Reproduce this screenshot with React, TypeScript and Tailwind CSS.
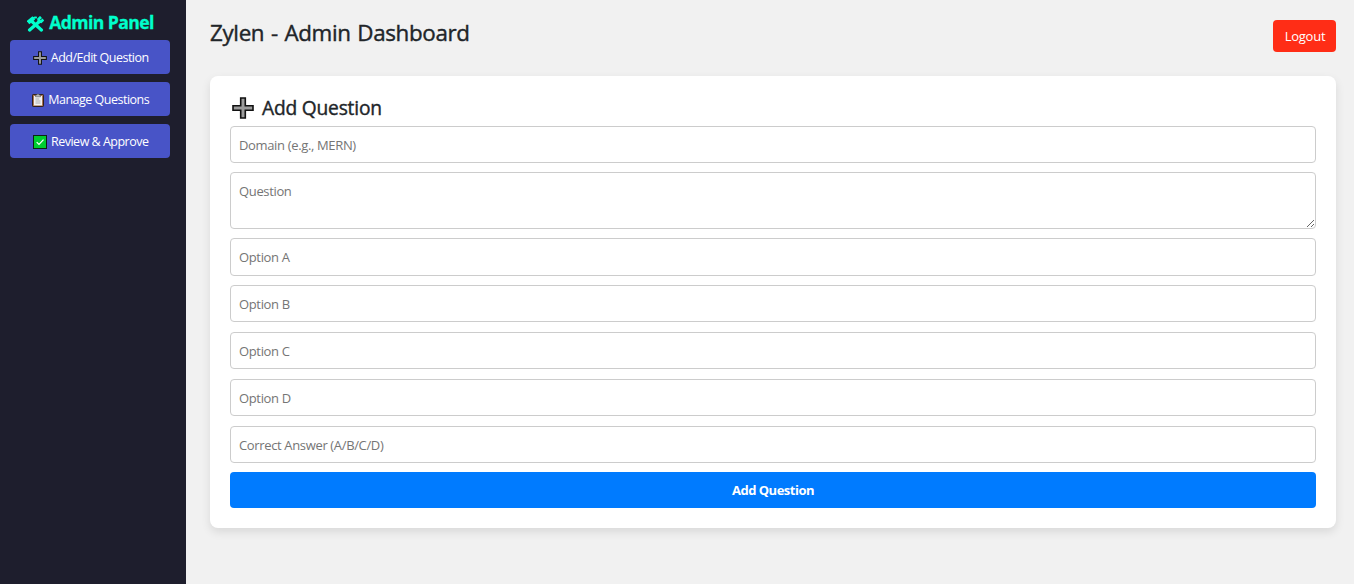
import type { ReactNode } from "react";

function PlusIcon({ className }: { className: string }) {
  return (
    <svg className={className} viewBox="0 0 22 22">
      <path d="M8.7 1h4.6v7.7H21v4.6h-7.7V21H8.7v-7.7H1V8.7h7.7z" fill="#9b9b9b" stroke="#111" strokeWidth="1.6" />
    </svg>
  );
}

function ToolsIcon() {
  return (
    <svg className="mt-0.5 h-4 w-[17px] shrink-0" viewBox="0 0 17 16" fill="none" stroke="#00ffcc">
      <path d="M5.2 5.8 14.4 14" strokeWidth="3.3" strokeLinecap="round" />
      <path d="M1 6.6 6.8 1.8" strokeWidth="4.2" />
      <path d="M6 2.2c1.2-.8 2.4-.9 3.9-.5" strokeWidth="1.8" />
      <path d="M2.6 14 12.4 5.4" strokeWidth="3.3" strokeLinecap="round" />
      <path d="M14 .9 11.6 3.3l.4 2 2 .4 2.4-2.2" strokeWidth="2.8" />
    </svg>
  );
}

function ClipboardIcon() {
  return (
    <svg className="h-[14px] w-3 shrink-0" viewBox="0 0 12 14">
      <rect x=".5" y="1.5" width="11" height="12" rx="0.7" fill="#a87552" stroke="#30201c" />
      <path d="M2 3h8v9.4H2z" fill="#f3f3f3" />
      <path d="M3.5 3.8V2h1.3c.1-1.4 2.3-1.4 2.4 0h1.3v1.8z" fill="#b8b8b8" stroke="#555" strokeWidth=".6" />
      <path d="M3.5 6h3.8M3.5 8h5M3.5 10h5" stroke="#a5a5a5" strokeWidth=".9" />
    </svg>
  );
}

function CheckIcon() {
  return (
    <svg className="h-[14px] w-[14px] shrink-0" viewBox="0 0 14 14">
      <rect x=".5" y=".5" width="13" height="13" fill="#00cc30" stroke="#0b2413" />
      <path d="m3.7 7.2 2.3 2.3 4.5-4.8" fill="none" stroke="#fff" strokeWidth="1.2" />
    </svg>
  );
}

function NavButton({ icon, children }: { icon: ReactNode; children: ReactNode }) {
  return (
    <button className="flex h-[34px] w-full items-center justify-center gap-1 rounded bg-[#4854c7] pt-0.5 pl-[1.5px] text-[12.5px] tracking-[-0.5px] text-white">
      {icon}
      <span>{children}</span>
    </button>
  );
}

const field =
  "block w-full rounded border border-[#ccc] bg-white px-2 text-[13px] tracking-[-0.35px] text-[#212529] outline-none placeholder:text-[#757575]";

export default function App() {
  return (
    <div className="flex h-[584px] w-full overflow-hidden bg-[#f1f1f1] font-['Segoe_UI','Open_Sans',sans-serif] text-[#212529]">
      <aside className="w-[186px] shrink-0 bg-[#1e1e2d] pt-2.5 pr-4 pl-2.5">
        <h2 className="mb-1.5 flex h-6 items-center justify-center gap-[5px] pt-px pl-px text-[17.6px] font-bold text-[#00ffcc]">
          <ToolsIcon />
          <span className="tracking-[-0.6px] [-webkit-text-stroke:0.3px]">Admin Panel</span>
        </h2>
        <nav className="flex flex-col gap-2">
          <NavButton icon={<PlusIcon className="h-[14px] w-[14px] shrink-0" />}>Add/Edit Question</NavButton>
          <NavButton icon={<ClipboardIcon />}>Manage Questions</NavButton>
          <NavButton icon={<CheckIcon />}>Review &amp; Approve</NavButton>
        </nav>
      </aside>

      <main className="flex-1 pt-5 pr-[18px] pl-6">
        <header className="mb-6 flex items-start justify-between">
          <h1 className="text-[22.4px] leading-[26px] font-medium tracking-[-0.35px] [word-spacing:1.2px] [-webkit-text-stroke:0.4px]">
            Zylen - Admin Dashboard
          </h1>
          <button className="h-8 w-[63px] rounded bg-[#ff2d16] pt-px pl-px text-[13px] tracking-[-0.25px] text-white">Logout</button>
        </header>

        <section className="h-[452px] rounded-lg bg-white p-5 shadow-[0_4px_10px_rgba(0,0,0,0.1)]">
          <h2 className="mb-1.5 flex h-6 items-center gap-2 pl-0.5 text-[19.2px] font-medium tracking-[-0.2px]">
            <PlusIcon className="h-[22px] w-[22px] shrink-0" />
            <span className="pt-px [-webkit-text-stroke:0.4px]">Add Question</span>
          </h2>
          <form className="flex flex-col">
            <input className={`${field} mb-[9px] h-[37px]`} placeholder="Domain (e.g., MERN)" />
            <textarea className={`${field} mb-[9px] h-[57px] pt-[9px] pb-2`} placeholder="Question" />
            <input className={`${field} mb-[9px] h-[38px]`} placeholder="Option A" />
            <input className={`${field} mb-2.5 h-[37px]`} placeholder="Option B" />
            <input className={`${field} mb-2.5 h-[37px]`} placeholder="Option C" />
            <input className={`${field} mb-2.5 h-[37px]`} placeholder="Option D" />
            <input className={`${field} mb-[9px] h-[37px]`} placeholder="Correct Answer (A/B/C/D)" />
            <button
              type="button"
              className="h-9 rounded bg-[#007bff] pt-0.5 text-[13px] font-bold tracking-[-0.5px] text-white"
            >
              Add Question
            </button>
          </form>
        </section>
      </main>
    </div>
  );
}
